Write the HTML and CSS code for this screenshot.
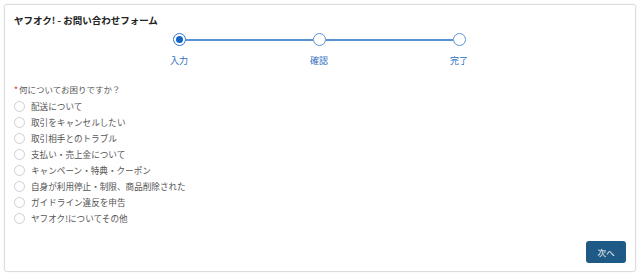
FILE: index.html
```html
<!DOCTYPE html>
<html lang="ja">
<head>
<meta charset="utf-8">
<link rel="stylesheet" href="styles.css">
</head>
<body>
<div class="card">
  <h1 class="title">ヤフオク! - お問い合わせフォーム</h1>
  <div class="steps">
    <div class="step active"><span class="dot"></span><span class="label">入力</span></div>
    <div class="line"></div>
    <div class="step"><span class="dot"></span><span class="label">確認</span></div>
    <div class="line"></div>
    <div class="step"><span class="dot"></span><span class="label">完了</span></div>
  </div>
  <div class="question"><span class="req">*</span>何についてお困りですか？</div>
  <ul class="options">
    <li><span class="radio"></span>配送について</li>
    <li><span class="radio"></span>取引をキャンセルしたい</li>
    <li><span class="radio"></span>取引相手とのトラブル</li>
    <li><span class="radio"></span>支払い・売上金について</li>
    <li><span class="radio"></span>キャンペーン・特典・クーポン</li>
    <li><span class="radio"></span>自身が利用停止・制限、商品削除された</li>
    <li><span class="radio"></span>ガイドライン違反を申告</li>
    <li><span class="radio"></span>ヤフオク!についてその他</li>
  </ul>
  <div class="actions"><button class="next">次へ</button></div>
</div>
</body>
</html>
```
FILE: styles.css
```css
html, body {
  margin: 0;
  padding: 0;
  background: #fff;
}
body {
  padding: 4px;
  font-family: "Noto Sans CJK JP", "Noto Sans", sans-serif;
  color: #555;
}
.card {
  box-sizing: border-box;
  height: 268px;
  border: 1px solid #dcdcdc;
  border-radius: 3px;
  box-shadow: 0 0 2px rgba(0,0,0,0.08);
  padding: 8px 9px 0 9px;
  display: flex;
  flex-direction: column;
}
.title {
  margin: 0;
  font-size: 9.5px;
  line-height: 14px;
  font-weight: bold;
  color: #222;
}
.steps {
  display: flex;
  align-items: flex-start;
  width: 293px;
  margin: 6px auto 0;
  position: relative;
  left: -1px;
}
.step {
  width: 13px;
  display: flex;
  flex-direction: column;
  align-items: center;
}
.dot {
  box-sizing: border-box;
  width: 13px;
  height: 13px;
  border: 1.5px solid #5a93d4;
  border-radius: 50%;
  background: #fff;
  display: flex;
  align-items: center;
  justify-content: center;
}
.step.active .dot {
  border-color: #2f74c8;
}
.step.active .dot::after {
  content: "";
  width: 7px;
  height: 7px;
  border-radius: 50%;
  background: #1565c8;
}
.label {
  margin-top: 8px;
  font-size: 9px;
  line-height: 14px;
  white-space: nowrap;
  color: #2d6fbf;
}
.line {
  flex: 1;
  height: 1.5px;
  margin-top: 6px;
  background: #5a93d4;
}
.question {
  margin-top: 14px;
  font-size: 8.5px;
  line-height: 14px;
  color: #555;
}
.req {
  color: #e5212b;
  margin-right: 1px;
}
.options {
  list-style: none;
  margin: 2px 0 0;
  padding: 0;
}
.options li {
  display: flex;
  align-items: center;
  height: 16px;
  font-size: 8.6px;
  color: #555;
}
.radio {
  box-sizing: border-box;
  width: 11px;
  height: 11px;
  border: 1px solid #cfcfcf;
  border-radius: 50%;
  margin: 0 6px 0 0;
  flex: none;
}
.actions {
  margin-top: auto;
  display: flex;
  justify-content: flex-end;
  padding-bottom: 8px;
}
.next {
  width: 40px;
  height: 22px;
  border: none;
  border-radius: 3px;
  background: #1f5a86;
  color: #fff;
  font-family: inherit;
  font-size: 8.5px;
  padding: 0;
}
```
